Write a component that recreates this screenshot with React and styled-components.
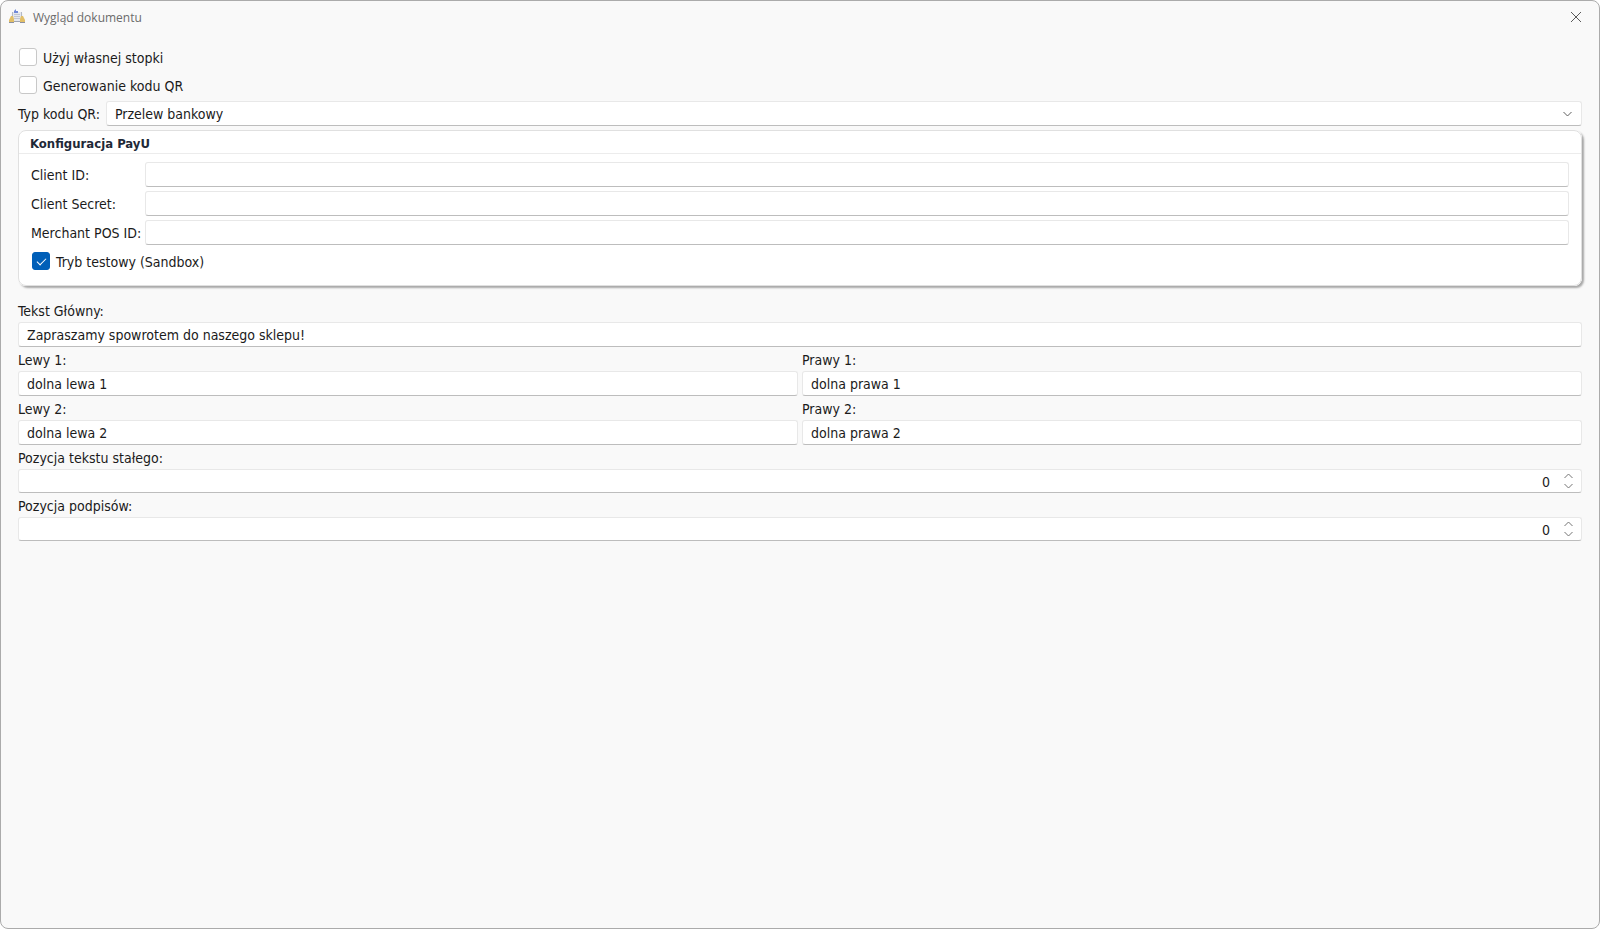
import React, { useState } from "react";
import styled, { createGlobalStyle } from "styled-components";

const GlobalStyle = createGlobalStyle`
  * {
    box-sizing: border-box;
  }
  body {
    margin: 0;
    background: #ffffff;
    color: #1b1b1b;
    font-family: Tahoma, "DejaVu Sans Condensed", "Open Sans", sans-serif;
    font-size: 14px;
    line-height: 16px;
  }
  input, select, button {
    font: inherit;
    color: inherit;
  }
`;

const Window = styled.div`
  min-height: 100vh;
  border: 1px solid #ababab;
  border-radius: 8px;
  background: #f9f9f9;
`;

const TitleBar = styled.header`
  display: flex;
  align-items: center;
  height: 32px;
  padding: 0 17px 0 8px;
`;

const Title = styled.h1`
  flex: 1;
  margin: 0;
  padding: 2px 0 0 8px;
  font-family: "Segoe UI", "Open Sans", sans-serif;
  font-size: 12px;
  font-weight: 400;
  color: #6b6b6b;
`;

const CloseButton = styled.button`
  display: flex;
  padding: 0;
  border: none;
  background: none;
  color: #5a5a5a;
`;

const Form = styled.form`
  display: flex;
  flex-direction: column;
  gap: 4px;
  padding: 12px 17px;
`;

const CheckRow = styled.label`
  display: flex;
  align-items: center;
  gap: 6px;
  height: 24px;
  padding-left: 1px;
`;

const CheckText = styled.span`
  padding-top: 2px;
`;

const CheckBox = styled.input`
  appearance: none;
  display: grid;
  place-items: center;
  width: 18px;
  height: 18px;
  margin: 0;
  border: 1px solid #c8c8c8;
  border-radius: 3px;
  background: #ffffff;

  &:checked {
    border-color: #005fb8;
    background: #005fb8;
  }
  &:checked::after {
    content: "";
    width: 8px;
    height: 4px;
    margin-bottom: 2px;
    border: solid #ffffff;
    border-width: 0 0 1px 1px;
    transform: rotate(-45deg);
  }
`;

const Row = styled.div`
  display: flex;
  align-items: center;
  gap: 6px;
`;

const Field = styled.div`
  position: relative;
  flex: 1;
  display: flex;
`;

const TextInput = styled.input`
  width: 100%;
  height: ${(props) => (props.type === "number" ? "24px" : "25px")};
  padding: 0 8px;
  border: 1px solid #e8e8e8;
  border-bottom-color: #bdbdbd;
  border-radius: 3px;
  background: #ffffff;
  outline: none;

  &[type="number"] {
    appearance: textfield;
    padding: 2px 31px 0 8px;
    text-align: right;
  }
  &::-webkit-inner-spin-button {
    appearance: none;
    margin: 0;
  }
`;

const Select = styled.select`
  appearance: none;
  width: 100%;
  height: 25px;
  padding: 0 32px 0 8px;
  border: 1px solid #e8e8e8;
  border-bottom-color: #bdbdbd;
  border-radius: 3px;
  background: #ffffff;
  outline: none;
`;

const SelectArrow = styled.svg`
  position: absolute;
  top: 10px;
  right: 10px;
  pointer-events: none;
`;

const SpinButtons = styled.div`
  position: absolute;
  top: 4px;
  right: 9px;
  display: flex;
  flex-direction: column;
  gap: 4px;
`;

const SpinButton = styled.button`
  display: flex;
  padding: 0;
  border: none;
  background: none;
`;

const Group = styled.fieldset`
  min-width: 0;
  margin: 0 0 12px;
  padding: 0;
  border: 1px solid #e0e0e0;
  border-radius: 8px;
  background: #ffffff;
  box-shadow: 2px 2px 2px #a8a8a8;
`;

const GroupTitle = styled.legend`
  float: left;
  width: 100%;
  height: 23px;
  padding: 5px 11px 0;
  border-bottom: 1px solid #ececec;
  font-size: 13px;
  font-weight: 700;
  color: #1f2937;
`;

const GroupBody = styled.div`
  clear: both;
  display: grid;
  grid-template-columns: max-content 1fr;
  align-items: center;
  gap: 4px;
  padding: 8px 12px 12px;

  ${CheckRow} {
    grid-column: 1 / -1;
  }
`;

const Columns = styled.div`
  display: grid;
  grid-template-columns: 1fr 1fr;
  gap: 4px;
`;

const Stack = styled.div`
  display: flex;
  flex-direction: column;
  gap: 3px;
  padding-top: 1px;
`;

const AppIcon = () => (
  <svg width="16" height="16" viewBox="0 0 16 16" aria-hidden="true">
    <path d="M3 3h10l1 9H2z" fill="#e4e7ed" />
    <path d="M3.500 3v5M12.500 3v5" stroke="#b3b9c6" />
    <path d="M5 5.500h6M5 7.500h6M5 9.500h6" stroke="#c0c6d2" />
    <path d="M5 4V2l2-2v2h2v2z" fill="#7189d8" />
    <path d="M2 7h2l1 3v3H0v-2z" fill="#e2bf68" />
    <path d="M14 7h-2l-1 3v3h5v-2z" fill="#e2bf68" />
    <path d="M0 13.500h5M11 13.500h5" stroke="#8b90a0" />
    <path d="M5 12.500h6" stroke="#a0a5b2" />
  </svg>
);

const Check = ({ label, checked = false }) => (
  <CheckRow>
    <CheckBox type="checkbox" defaultChecked={checked} />
    <CheckText>{label}</CheckText>
  </CheckRow>
);

const Spinner = ({ id, label }) => {
  const [value, setValue] = useState(0);

  return (
    <Stack>
      <label htmlFor={id}>{label}</label>
      <Field>
        <TextInput
          id={id}
          type="number"
          value={value}
          onChange={(e) => setValue(Number(e.target.value))}
        />
        <SpinButtons>
          <SpinButton
            type="button"
            aria-label="Zwiększ"
            onClick={() => setValue(value + 1)}
          >
            <svg width="9" height="6" viewBox="0 0 9 6" fill="none">
              <path d="M.5 5 4.500 1l4 4" stroke="#757575" />
            </svg>
          </SpinButton>
          <SpinButton
            type="button"
            aria-label="Zmniejsz"
            onClick={() => setValue(value - 1)}
          >
            <svg width="9" height="6" viewBox="0 0 9 6" fill="none">
              <path d="m.5 1 4 4 4-4" stroke="#757575" />
            </svg>
          </SpinButton>
        </SpinButtons>
      </Field>
    </Stack>
  );
};

const LabeledText = ({ id, label, value }) => (
  <Stack>
    <label htmlFor={id}>{label}</label>
    <TextInput id={id} type="text" defaultValue={value} />
  </Stack>
);

const App = () => {
  return (
    <>
      <GlobalStyle />
      <Window>
        <TitleBar>
          <AppIcon />
          <Title>Wygląd dokumentu</Title>
          <CloseButton type="button" aria-label="Zamknij">
            <svg width="12" height="12" viewBox="0 0 12 12" fill="none">
              <path d="m1 1 10 10M11 1 1 11" stroke="currentColor" />
            </svg>
          </CloseButton>
        </TitleBar>
        <Form>
          <Check label="Użyj własnej stopki" />
          <Check label="Generowanie kodu QR" />
          <Row>
            <label htmlFor="qrType">Typ kodu QR:</label>
            <Field>
              <Select id="qrType">
                <option>Przelew bankowy</option>
              </Select>
              <SelectArrow width="9" height="6" viewBox="0 0 9 6" fill="none">
                <path d="m.5 1 4 4 4-4" stroke="#5e5e5e" />
              </SelectArrow>
            </Field>
          </Row>
          <Group>
            <GroupTitle>Konfiguracja PayU</GroupTitle>
            <GroupBody>
              <label htmlFor="clientId">Client ID:</label>
              <TextInput id="clientId" type="text" />
              <label htmlFor="clientSecret">Client Secret:</label>
              <TextInput id="clientSecret" type="text" />
              <label htmlFor="posId">Merchant POS ID:</label>
              <TextInput id="posId" type="text" />
              <Check label="Tryb testowy (Sandbox)" checked />
            </GroupBody>
          </Group>
          <LabeledText
            id="mainText"
            label="Tekst Główny:"
            value="Zapraszamy spowrotem do naszego sklepu!"
          />
          <Columns>
            <LabeledText id="left1" label="Lewy 1:" value="dolna lewa 1" />
            <LabeledText id="right1" label="Prawy 1:" value="dolna prawa 1" />
            <LabeledText id="left2" label="Lewy 2:" value="dolna lewa 2" />
            <LabeledText id="right2" label="Prawy 2:" value="dolna prawa 2" />
          </Columns>
          <Spinner id="textPosition" label="Pozycja tekstu stałego:" />
          <Spinner id="signPosition" label="Pozycja podpisów:" />
        </Form>
      </Window>
    </>
  );
};

export default App;
